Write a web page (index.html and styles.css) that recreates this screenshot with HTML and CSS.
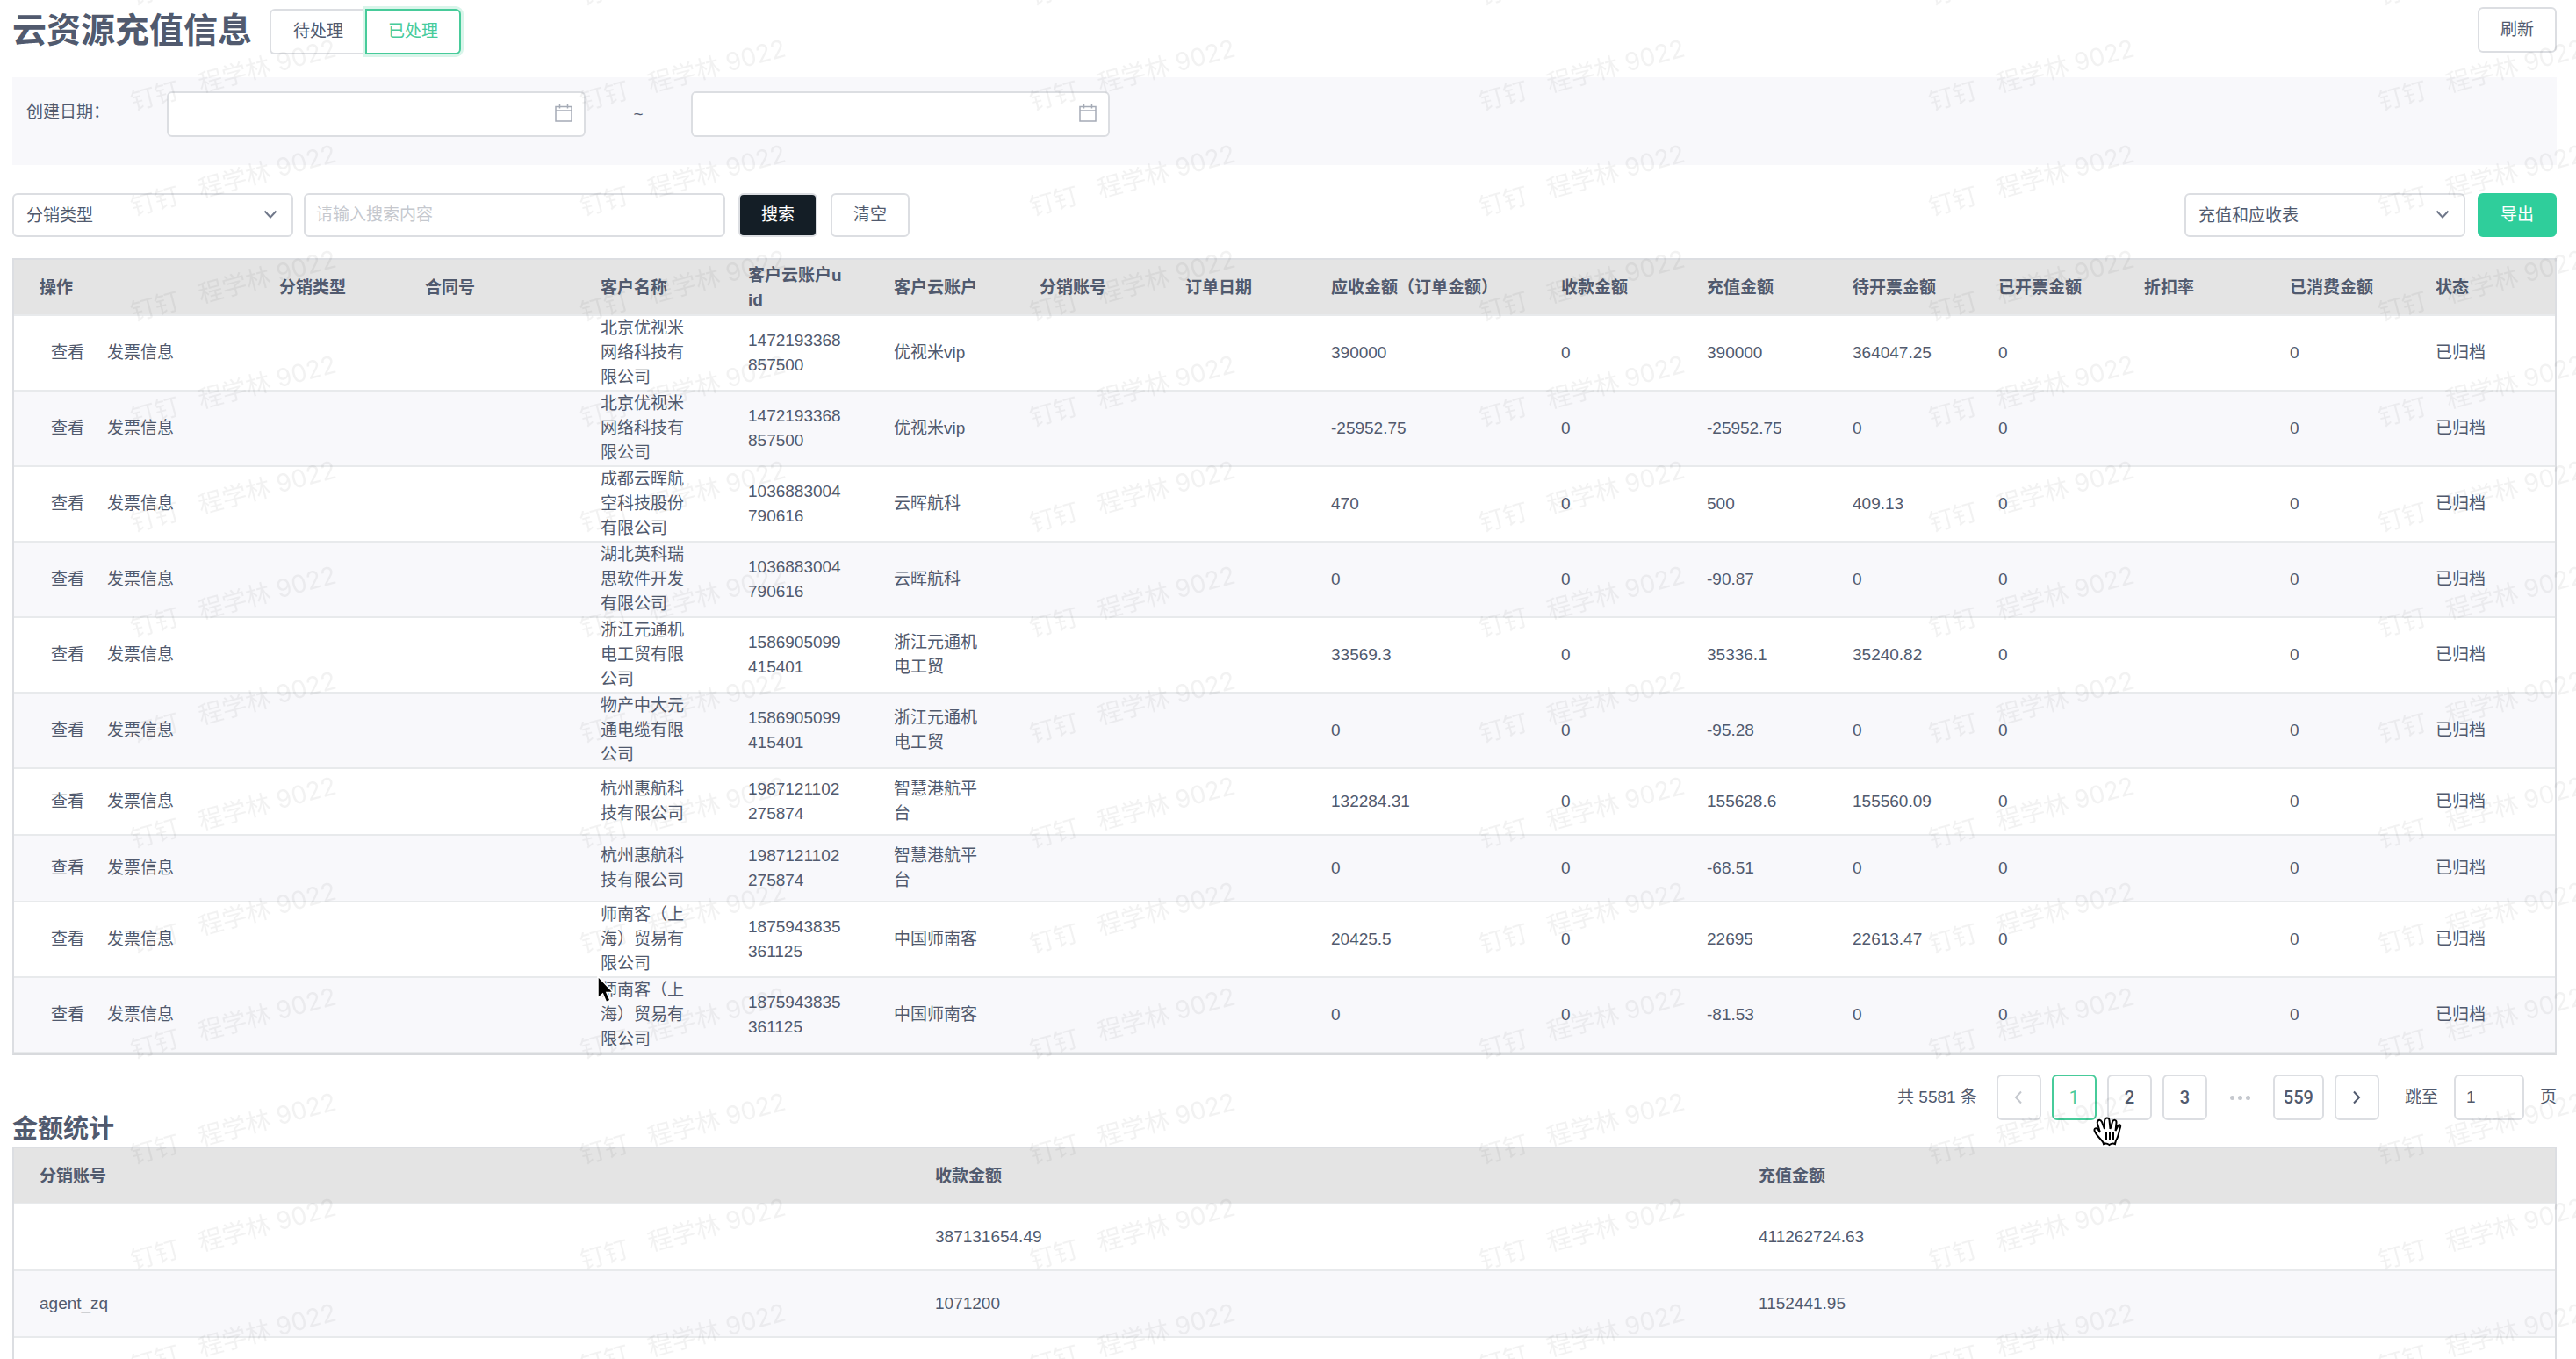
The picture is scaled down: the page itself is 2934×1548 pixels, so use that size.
FILE: index.html
```html
<!DOCTYPE html>
<html lang="zh-CN">
<head>
<meta charset="utf-8">
<title>云资源充值信息</title>
<link rel="stylesheet" href="styles.css">
</head>
<body>
<main class="page">
  <header class="page-head">
    <h1 class="title">云资源充值信息</h1>
    <div class="tabs">
      <button class="tab" type="button">待处理</button>
      <button class="tab tab-active" type="button">已处理</button>
    </div>
    <button class="btn push" type="button">刷新</button>
  </header>

  <section class="filter">
    <label class="filter-label" for="date-from">创建日期：</label>
    <div class="date-box">
      <input class="input" id="date-from" type="text">
      <svg class="calendar" viewBox="0 0 20 20" aria-hidden="true"><path d="M1 2.500H19V19H1ZM1 7H19M5.500 0V4.500M14.500 0V4.500"/></svg>
    </div>
    <span class="tilde">~</span>
    <div class="date-box">
      <input class="input" id="date-to" type="text" aria-label="结束日期">
      <svg class="calendar" viewBox="0 0 20 20" aria-hidden="true"><path d="M1 2.500H19V19H1ZM1 7H19M5.500 0V4.500M14.500 0V4.500"/></svg>
    </div>
  </section>

  <section class="toolbar">
    <div class="toolbar-group">
      <div class="select-box">
        <select class="select" aria-label="搜索字段"><option>分销类型</option></select>
        <svg class="chevron" viewBox="0 0 16 10" aria-hidden="true"><path d="M1.500 1.500 8 8.500 14.500 1.500"/></svg>
      </div>
      <input class="input keyword" type="text" placeholder="请输入搜索内容" aria-label="搜索内容">
    </div>
    <button class="btn btn-dark" type="button">搜索</button>
    <button class="btn" type="button">清空</button>
    <div class="select-box push">
      <select class="select" aria-label="导出报表"><option>充值和应收表</option></select>
      <svg class="chevron" viewBox="0 0 16 10" aria-hidden="true"><path d="M1.500 1.500 8 8.500 14.500 1.500"/></svg>
    </div>
    <button class="btn btn-primary" type="button">导出</button>
  </section>

  <table class="grid orders">
    <colgroup>
      <col class="c-act"><col class="c-std"><col class="c-contract"><col class="c-name"><col class="c-std"><col class="c-std"><col class="c-std"><col class="c-std"><col class="c-due"><col class="c-std"><col class="c-std"><col class="c-std"><col class="c-std"><col class="c-std"><col class="c-std"><col>
    </colgroup>
    <thead>
      <tr><th>操作</th><th>分销类型</th><th>合同号</th><th>客户名称</th><th>客户云账户uid</th><th>客户云账户</th><th>分销账号</th><th>订单日期</th><th>应收金额（订单金额）</th><th>收款金额</th><th>充值金额</th><th>待开票金额</th><th>已开票金额</th><th>折扣率</th><th>已消费金额</th><th>状态</th></tr>
    </thead>
    <tbody>
      <tr><td><div class="actions"><button type="button">查看</button><button type="button">发票信息</button></div></td><td></td><td></td><td>北京优视米网络科技有限公司</td><td>1472193368857500</td><td>优视米vip</td><td></td><td></td><td>390000</td><td>0</td><td>390000</td><td>364047.25</td><td>0</td><td></td><td>0</td><td>已归档</td></tr>
      <tr><td><div class="actions"><button type="button">查看</button><button type="button">发票信息</button></div></td><td></td><td></td><td>北京优视米网络科技有限公司</td><td>1472193368857500</td><td>优视米vip</td><td></td><td></td><td>-25952.75</td><td>0</td><td>-25952.75</td><td>0</td><td>0</td><td></td><td>0</td><td>已归档</td></tr>
      <tr><td><div class="actions"><button type="button">查看</button><button type="button">发票信息</button></div></td><td></td><td></td><td>成都云晖航空科技股份有限公司</td><td>1036883004790616</td><td>云晖航科</td><td></td><td></td><td>470</td><td>0</td><td>500</td><td>409.13</td><td>0</td><td></td><td>0</td><td>已归档</td></tr>
      <tr><td><div class="actions"><button type="button">查看</button><button type="button">发票信息</button></div></td><td></td><td></td><td>湖北英科瑞思软件开发有限公司</td><td>1036883004790616</td><td>云晖航科</td><td></td><td></td><td>0</td><td>0</td><td>-90.87</td><td>0</td><td>0</td><td></td><td>0</td><td>已归档</td></tr>
      <tr><td><div class="actions"><button type="button">查看</button><button type="button">发票信息</button></div></td><td></td><td></td><td>浙江元通机电工贸有限公司</td><td>1586905099415401</td><td>浙江元通机电工贸</td><td></td><td></td><td>33569.3</td><td>0</td><td>35336.1</td><td>35240.82</td><td>0</td><td></td><td>0</td><td>已归档</td></tr>
      <tr><td><div class="actions"><button type="button">查看</button><button type="button">发票信息</button></div></td><td></td><td></td><td>物产中大元通电缆有限公司</td><td>1586905099415401</td><td>浙江元通机电工贸</td><td></td><td></td><td>0</td><td>0</td><td>-95.28</td><td>0</td><td>0</td><td></td><td>0</td><td>已归档</td></tr>
      <tr><td><div class="actions"><button type="button">查看</button><button type="button">发票信息</button></div></td><td></td><td></td><td>杭州惠航科技有限公司</td><td>1987121102275874</td><td>智慧港航平台</td><td></td><td></td><td>132284.31</td><td>0</td><td>155628.6</td><td>155560.09</td><td>0</td><td></td><td>0</td><td>已归档</td></tr>
      <tr><td><div class="actions"><button type="button">查看</button><button type="button">发票信息</button></div></td><td></td><td></td><td>杭州惠航科技有限公司</td><td>1987121102275874</td><td>智慧港航平台</td><td></td><td></td><td>0</td><td>0</td><td>-68.51</td><td>0</td><td>0</td><td></td><td>0</td><td>已归档</td></tr>
      <tr><td><div class="actions"><button type="button">查看</button><button type="button">发票信息</button></div></td><td></td><td></td><td>师南客（上海）贸易有限公司</td><td>1875943835361125</td><td>中国师南客</td><td></td><td></td><td>20425.5</td><td>0</td><td>22695</td><td>22613.47</td><td>0</td><td></td><td>0</td><td>已归档</td></tr>
      <tr><td><div class="actions"><button type="button">查看</button><button type="button">发票信息</button></div></td><td></td><td></td><td>师南客（上海）贸易有限公司</td><td>1875943835361125</td><td>中国师南客</td><td></td><td></td><td>0</td><td>0</td><td>-81.53</td><td>0</td><td>0</td><td></td><td>0</td><td>已归档</td></tr>
    </tbody>
  </table>

  <nav class="pager" aria-label="分页">
    <span class="total">共 5581 条</span>
    <button class="pg pg-off" type="button" aria-label="上一页" disabled><svg class="arrow" viewBox="0 0 10 16" aria-hidden="true"><path d="M8 1.500 2 8 8 14.500"/></svg></button>
    <button class="pg pg-active" type="button">1</button>
    <button class="pg" type="button">2</button>
    <button class="pg" type="button">3</button>
    <span class="dots"><i></i><i></i><i></i></span>
    <button class="pg" type="button">559</button>
    <button class="pg" type="button" aria-label="下一页"><svg class="arrow" viewBox="0 0 10 16" aria-hidden="true"><path d="M2 1.500 8 8 2 14.500"/></svg></button>
    <label class="jump" for="jump">跳至</label>
    <input class="input jump-input" id="jump" type="text" value="1">
    <span>页</span>
  </nav>

  <h2 class="subtitle">金额统计</h2>
  <table class="grid sums">
    <colgroup><col class="s-account"><col class="s-received"><col></colgroup>
    <thead><tr><th>分销账号</th><th>收款金额</th><th>充值金额</th></tr></thead>
    <tbody>
      <tr><td></td><td>387131654.49</td><td>411262724.63</td></tr>
      <tr><td>agent_zq</td><td>1071200</td><td>1152441.95</td></tr>
      <tr><td></td><td></td><td></td></tr>
    </tbody>
  </table>
</main>

<svg class="watermark" aria-hidden="true">
  <defs>
    <pattern id="mark" x="100" y="28" width="512" height="120" patternUnits="userSpaceOnUse">
      <text class="mark-text" x="52" y="98" transform="rotate(-15 52 98)" xml:space="preserve">钉钉   程学林 9022</text>
    </pattern>
  </defs>
  <rect width="100%" height="100%" fill="url(#mark)"/>
</svg>

<svg class="cursor cursor-arrow" viewBox="0 0 20 32" aria-hidden="true"><path d="M1 1V26L6.500 21 10.500 30.500 15 28.500 11 19.500H18.500Z"/></svg>
<svg class="cursor cursor-hand" viewBox="0 0 34 34" aria-hidden="true"><path d="M12 31C11 26 5 24 2 17 0 13 4 12 6 15L8 18 5 8C4 4 8 2 10 6L13 14V5C13 1 18 0 18.500 4L19.500 14 22 6C23 3 27 3 26.500 7L25.500 16 28 11C29 8 32 9 31 12 29 18 29 23 26 27L25 31Q22 29.500 18.500 32 15 29.500 12 31Z"/><path d="M15 18V26M19 18V26M23 18V26"/></svg>
</body>
</html>
```
FILE: styles.css
```css
* { box-sizing: border-box; }

body {
  margin: 0;
  height: 100vh;
  overflow: hidden;
  background: #fff;
  color: #515a6e;
  font: 19px/28px "Liberation Sans", "Noto Sans CJK SC", sans-serif;
}

button, input, select { font: inherit; color: inherit; }
button { cursor: pointer; }

.page { padding: 8px 22px 0 14px; }
.push { margin-left: auto; }

.page-head { display: flex; align-items: flex-start; height: 80px; }
.title { margin: 0 20px 0 0; font-size: 39px; line-height: 54px; }
.tabs { display: flex; padding-top: 2px; }
.tab {
  width: 109px;
  height: 52px;
  padding: 0;
  border: 2px solid #dcdee2;
  border-radius: 6px 0 0 6px;
  background: #fff;
}
.tab:first-child { border-right: 0; }
.tab-active {
  border-color: #47cb9a;
  border-radius: 0 6px 6px 0;
  color: #47cb9a;
  box-shadow: 0 0 0 3px #d9f5ea;
}

.btn {
  width: 90px;
  height: 50px;
  padding: 0;
  border: 2px solid #dcdee2;
  border-radius: 6px;
  background: #fff;
}
.page-head .btn { height: 52px; }
.btn-dark { background: #141e26; color: #fff; }
.btn-primary { border-color: #2fce9b; background: #2fce9b; color: #fff; }

.input {
  width: 100%;
  height: 50px;
  padding: 0 12px;
  border: 2px solid #dcdee2;
  border-radius: 6px;
  background: #fff;
  outline: 0;
}
.input::placeholder { color: #c5c8ce; opacity: 1; }

.filter {
  display: flex;
  height: 100px;
  padding: 16px;
  background: #f8f8fb;
}
.filter-label { width: 160px; line-height: 48px; }
.date-box { position: relative; width: 477px; }
.date-box .input { height: 52px; }
.calendar {
  position: absolute;
  top: 15px;
  right: 15px;
  width: 20px;
  height: 20px;
  fill: none;
  stroke: #a5abb6;
  stroke-width: 1.5;
}
.tilde { width: 120px; line-height: 52px; text-align: center; }

.toolbar { display: flex; gap: 15px; padding: 32px 0 24px; }
.toolbar > :last-child { margin-left: -1px; }
.toolbar-group { display: flex; gap: 12px; }
.select-box { position: relative; width: 320px; }
.select {
  width: 100%;
  height: 50px;
  padding: 2px 14px 0;
  border: 2px solid #dcdee2;
  border-radius: 6px;
  background: #fff;
  appearance: none;
}
.chevron {
  position: absolute;
  top: 19px;
  right: 18px;
  width: 16px;
  height: 10px;
  fill: none;
  stroke: #70788a;
  stroke-width: 2;
}
.keyword { width: 480px; }

.grid {
  width: 100%;
  border: 2px solid #dcdee2;
  border-spacing: 0;
  border-bottom-color: #d8dadd;
  table-layout: fixed;
  word-break: break-all;
}
.grid th, .grid td {
  padding: 0 29px;
  border-bottom: 2px solid #e8eaec;
  text-align: left;
}
.grid th { height: 64px; padding-top: 2px; background: #e4e4e4; }
.grid td { height: 76px; }
.grid tbody tr:nth-child(even) { background: #f8f8fb; }

.c-act { width: 273px; }
.c-std { width: 166px; }
.c-contract { width: 200px; }
.c-name { width: 168px; }
.c-due { width: 262px; }
.s-account { width: 1020px; }
.s-received { width: 938px; }

.actions { display: flex; gap: 26px; padding-left: 13px; }
.actions button { padding: 0; border: 0; background: none; }

.pager {
  display: flex;
  align-items: center;
  justify-content: flex-end;
  gap: 12px;
  padding-top: 22px;
}
.total { margin-right: 10px; }
.pg {
  display: flex;
  align-items: center;
  justify-content: center;
  min-width: 51px;
  height: 52px;
  padding: 0 10px;
  border: 2px solid #dcdee2;
  border-radius: 6px;
  background: #fff;
  font-family: Roboto, sans-serif;
  font-size: 20px;
  font-weight: 500;
}
.pg-active { border-color: #47cb9a; color: #47cb9a; font-weight: 400; }
.pg-off { color: #c5c8ce; }
.arrow { width: 10px; height: 16px; fill: none; stroke: currentColor; stroke-width: 2; }
.dots { display: flex; justify-content: center; gap: 4px; width: 51px; }
.dots i { width: 5px; height: 5px; border-radius: 50%; background: #c5c8ce; }
.jump { margin: 0 6px 0 17px; }
.jump-input { width: 80px; height: 52px; margin-right: 6px; }

.subtitle { margin: -10px 0 0; font-size: 29px; line-height: 40px; }

.watermark {
  position: fixed;
  inset: 0;
  width: 100%;
  height: 100%;
  pointer-events: none;
}
.mark-text {
  font-family: Inter, "Noto Sans CJK SC", sans-serif;
  font-size: 28px;
  fill: #000;
  fill-opacity: .05;
}

.cursor { position: absolute; pointer-events: none; }
.cursor-arrow { left: 680px; top: 1111px; width: 20px; height: 32px; fill: #000; stroke: #fff; stroke-width: 1.5; }
.cursor-hand { left: 2384px; top: 1272px; width: 34px; height: 34px; fill: #fff; stroke: #000; stroke-width: 2; }
```
